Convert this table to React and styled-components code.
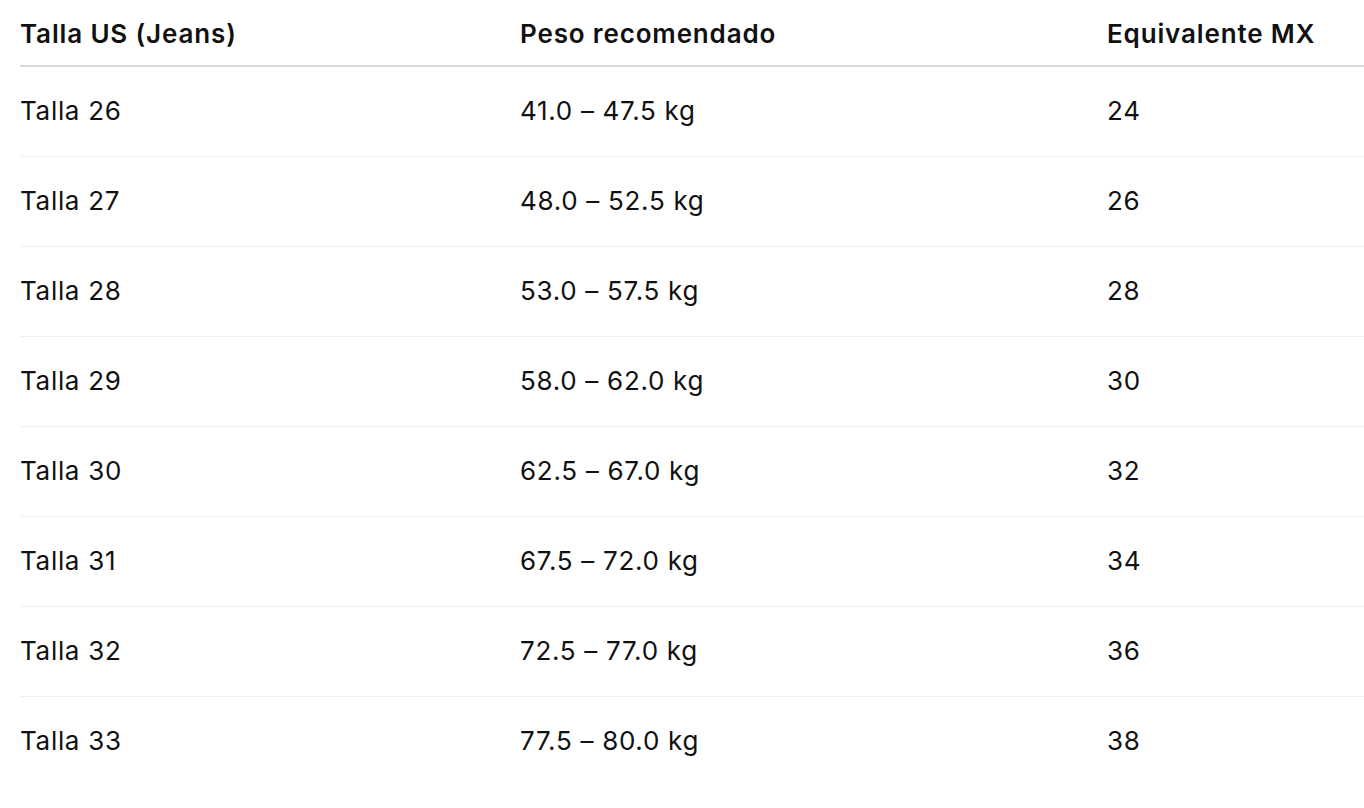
import React from 'react';
import styled, { createGlobalStyle } from 'styled-components';

const GlobalStyle = createGlobalStyle`
  body {
    margin: 0;
    background: #ffffff;
    font-family: Inter, "Liberation Sans", sans-serif;
    color: #111111;
  }
`;

const Wrapper = styled.div`
  padding-left: 20px;
  overflow: hidden;
`;

const Row = styled.div`
  display: grid;
  grid-template-columns: 500px 587px 1fr;
  align-items: center;
  height: ${(p) => (p.head ? '65px' : '89px')};
  border-bottom: ${(p) => (p.head ? '2px solid #d9d9d9' : p.last ? 'none' : '1px solid #efefef')};
`;

const Cell = styled.div`
  font-size: 26px;
  font-weight: ${(p) => (p.head ? 600 : 400)};
  letter-spacing: ${(p) => (p.head ? '0.85px' : '0.7px')};
  white-space: nowrap;
  padding-top: ${(p) => (p.head ? '2px' : '0')};
  padding-bottom: ${(p) => (p.head ? '0' : '2px')};
`;

const rows = [
  ['Talla 26', '41.0 – 47.5 kg', '24'],
  ['Talla 27', '48.0 – 52.5 kg', '26'],
  ['Talla 28', '53.0 – 57.5 kg', '28'],
  ['Talla 29', '58.0 – 62.0 kg', '30'],
  ['Talla 30', '62.5 – 67.0 kg', '32'],
  ['Talla 31', '67.5 – 72.0 kg', '34'],
  ['Talla 32', '72.5 – 77.0 kg', '36'],
  ['Talla 33', '77.5 – 80.0 kg', '38'],
];

const App = () => (
  <>
    <GlobalStyle />
    <Wrapper>
      <Row head>
        <Cell head>Talla US (Jeans)</Cell>
        <Cell head>Peso recomendado</Cell>
        <Cell head>Equivalente MX</Cell>
      </Row>
      {rows.map((r, i) => (
        <Row key={r[0]} last={i === rows.length - 1}>
          {r.map((c) => (
            <Cell key={c}>{c}</Cell>
          ))}
        </Row>
      ))}
    </Wrapper>
  </>
);

export default App;
